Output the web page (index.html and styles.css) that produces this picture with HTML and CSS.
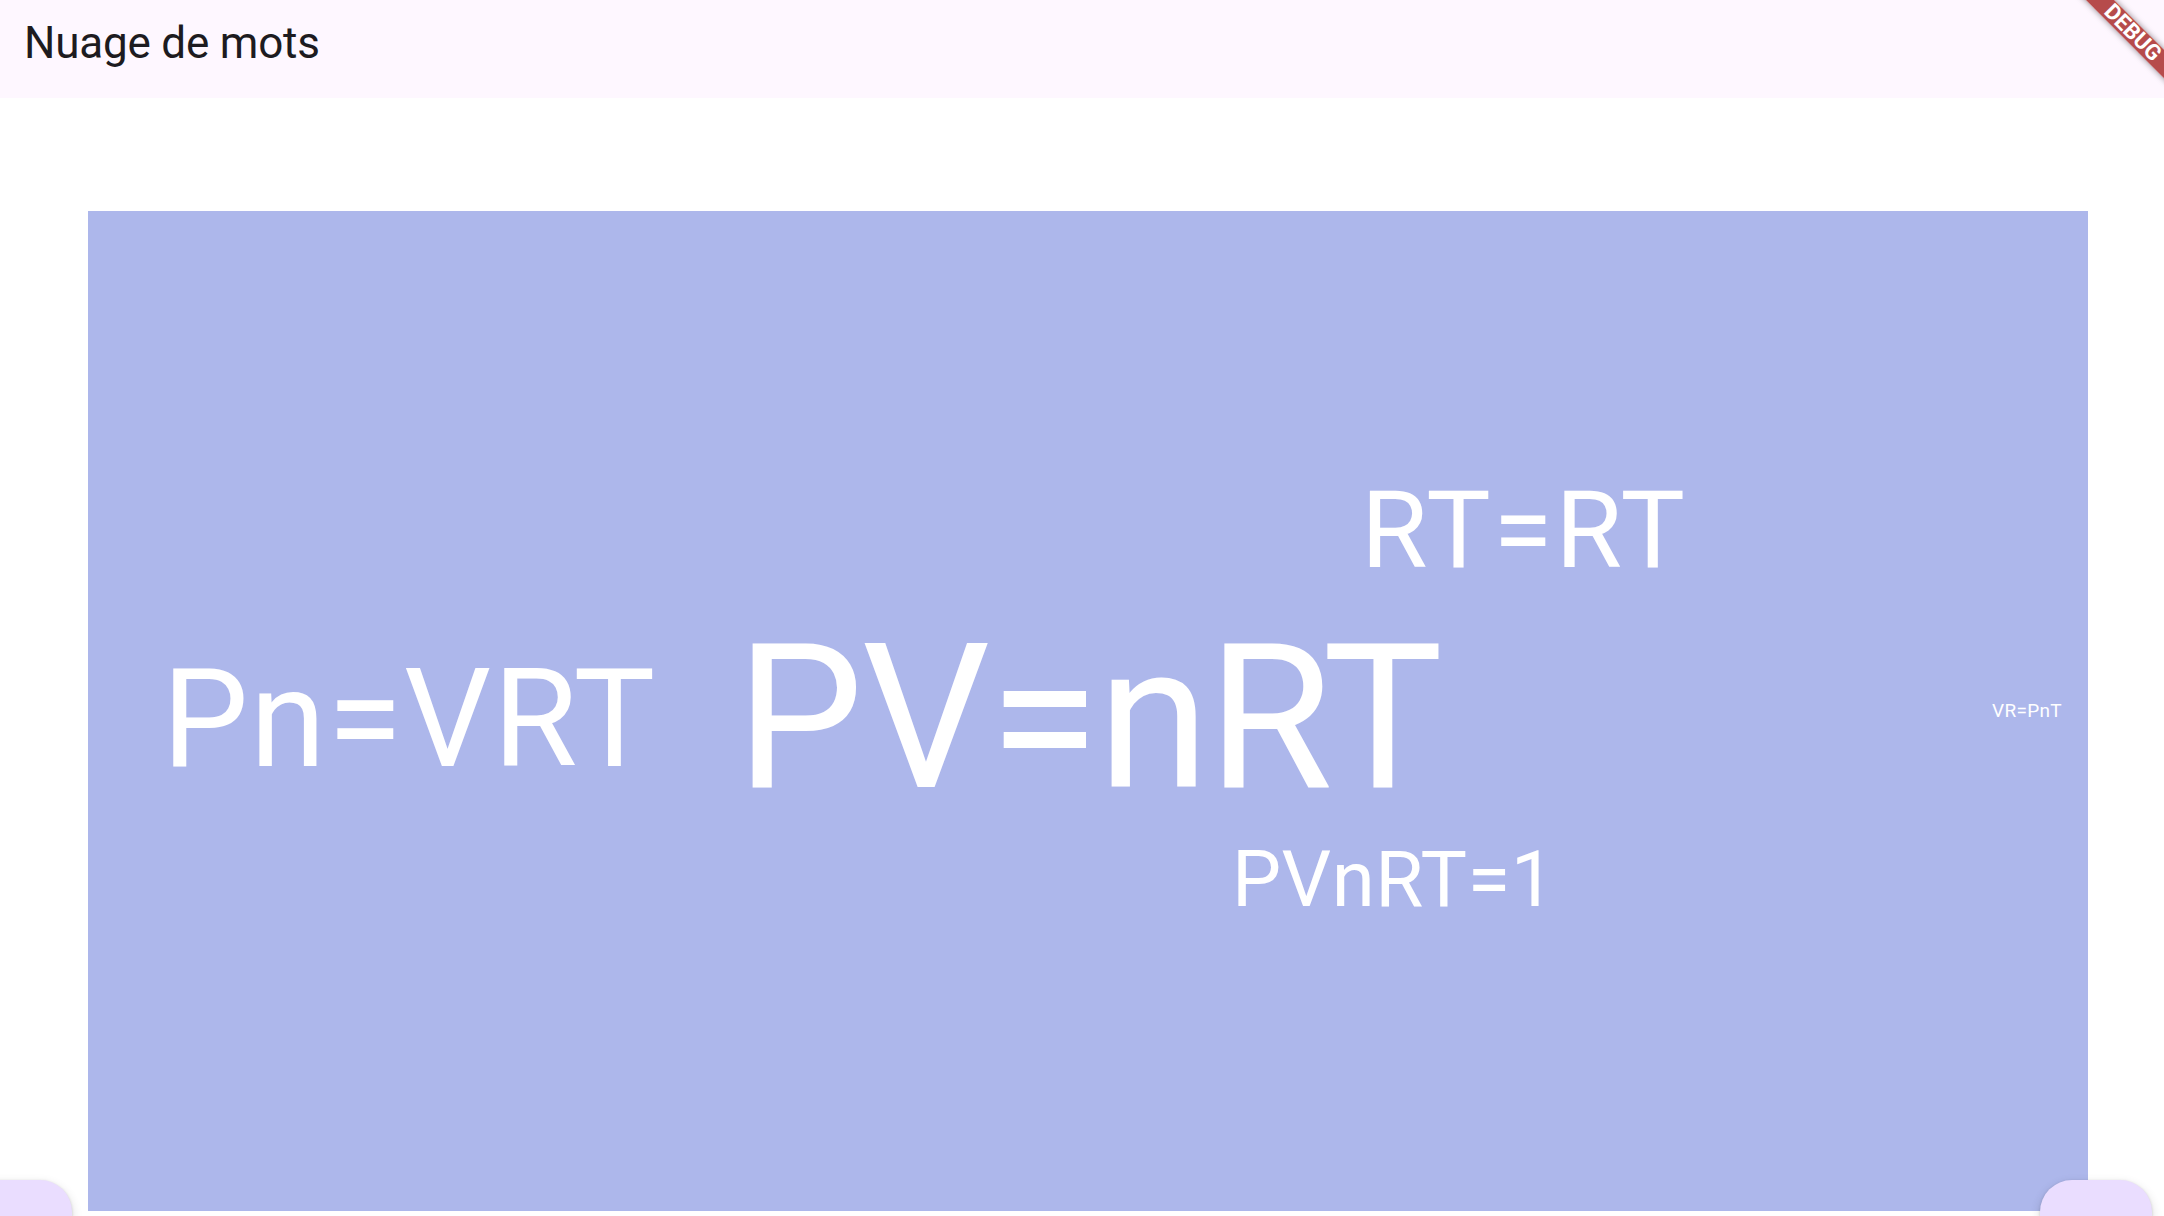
FILE: index.html
```html
<!DOCTYPE html>
<html lang="fr">
<head>
<meta charset="utf-8">
<title>Nuage de mots</title>
<link rel="stylesheet" href="styles.css">
</head>
<body>
<header class="app-bar">
  <h1 class="app-title">Nuage de mots</h1>
</header>
<main class="content">
  <div class="cloud">
    <span class="word w-pnvrt">Pn=VRT</span>
    <span class="word w-main">PV=nRT</span>
    <span class="word w-rtrt">RT=RT</span>
    <span class="word w-pvnrt1">PVnRT=1</span>
    <span class="word w-vrpnt">VR=PnT</span>
  </div>
</main>
<div class="fab fab-left"></div>
<div class="fab fab-right"></div>
<div class="debug-corner"><div class="debug-band">DEBUG</div></div>
</body>
</html>
```
FILE: styles.css
```css
html, body {
  margin: 0;
  padding: 0;
  background: #ffffff;
  font-family: Roboto, "Liberation Sans", sans-serif;
  overflow: hidden;
  width: 2164px;
  height: 1216px;
}

.app-bar {
  height: 98px;
  background: #fef7ff;
  display: flex;
  align-items: flex-start;
  padding: 0 0 0 24px;
  box-sizing: border-box;
}

.app-title {
  margin: 21px 0 0 0;
  font-size: 44px;
  line-height: 44px;
  font-weight: 400;
  color: #1d1b20;
  letter-spacing: -0.2px;
}

.content {
  padding: 113px 0 0 88px;
}

.cloud {
  position: relative;
  width: 2000px;
  height: 1000px;
  background: #adb7eb;
  overflow: hidden;
}

.word {
  position: absolute;
  color: #ffffff;
  line-height: 1;
  white-space: nowrap;
}

.w-main   { font-size: 202px; left: 648px;  top: 406px; letter-spacing: -1.7px; }
.w-pnvrt  { font-size: 137px; left: 74px;   top: 440px; letter-spacing: 1.6px; }
.w-rtrt   { font-size: 108px; left: 1273px; top: 265px; letter-spacing: 2.8px; }
.w-pvnrt1 { font-size: 78px;  left: 1144px; top: 630px; letter-spacing: 0.4px; }
.w-vrpnt  { font-size: 19px;  left: 1904px; top: 490px; letter-spacing: 0.3px; }

.fab {
  position: absolute;
  top: 1180px;
  width: 112px;
  height: 36px;
  border-radius: 32px 32px 0 0;
  background: #eaddff;
  box-shadow: 0 1px 3px rgba(0,0,0,0.18), 0 4px 8px 3px rgba(0,0,0,0.08);
}

.fab-left { left: -40px; }
.fab-right { left: 2040px; }

.debug-corner {
  position: absolute;
  top: 0;
  right: 0;
  width: 130px;
  height: 130px;
  overflow: hidden;
}

.debug-band {
  position: absolute;
  left: -12px;
  top: 22px;
  width: 220px;
  height: 20px;
  transform: rotate(45deg);
  background: rgba(176, 60, 60, 0.92);
  box-shadow: 0 0 6px rgba(0,0,0,0.45);
  color: #ffffff;
  font-family: Roboto, "Liberation Sans", sans-serif;
  font-weight: 700;
  font-size: 22px;
  line-height: 20px;
  text-align: center;
  padding-left: 2px;
  box-sizing: border-box;
}
```
